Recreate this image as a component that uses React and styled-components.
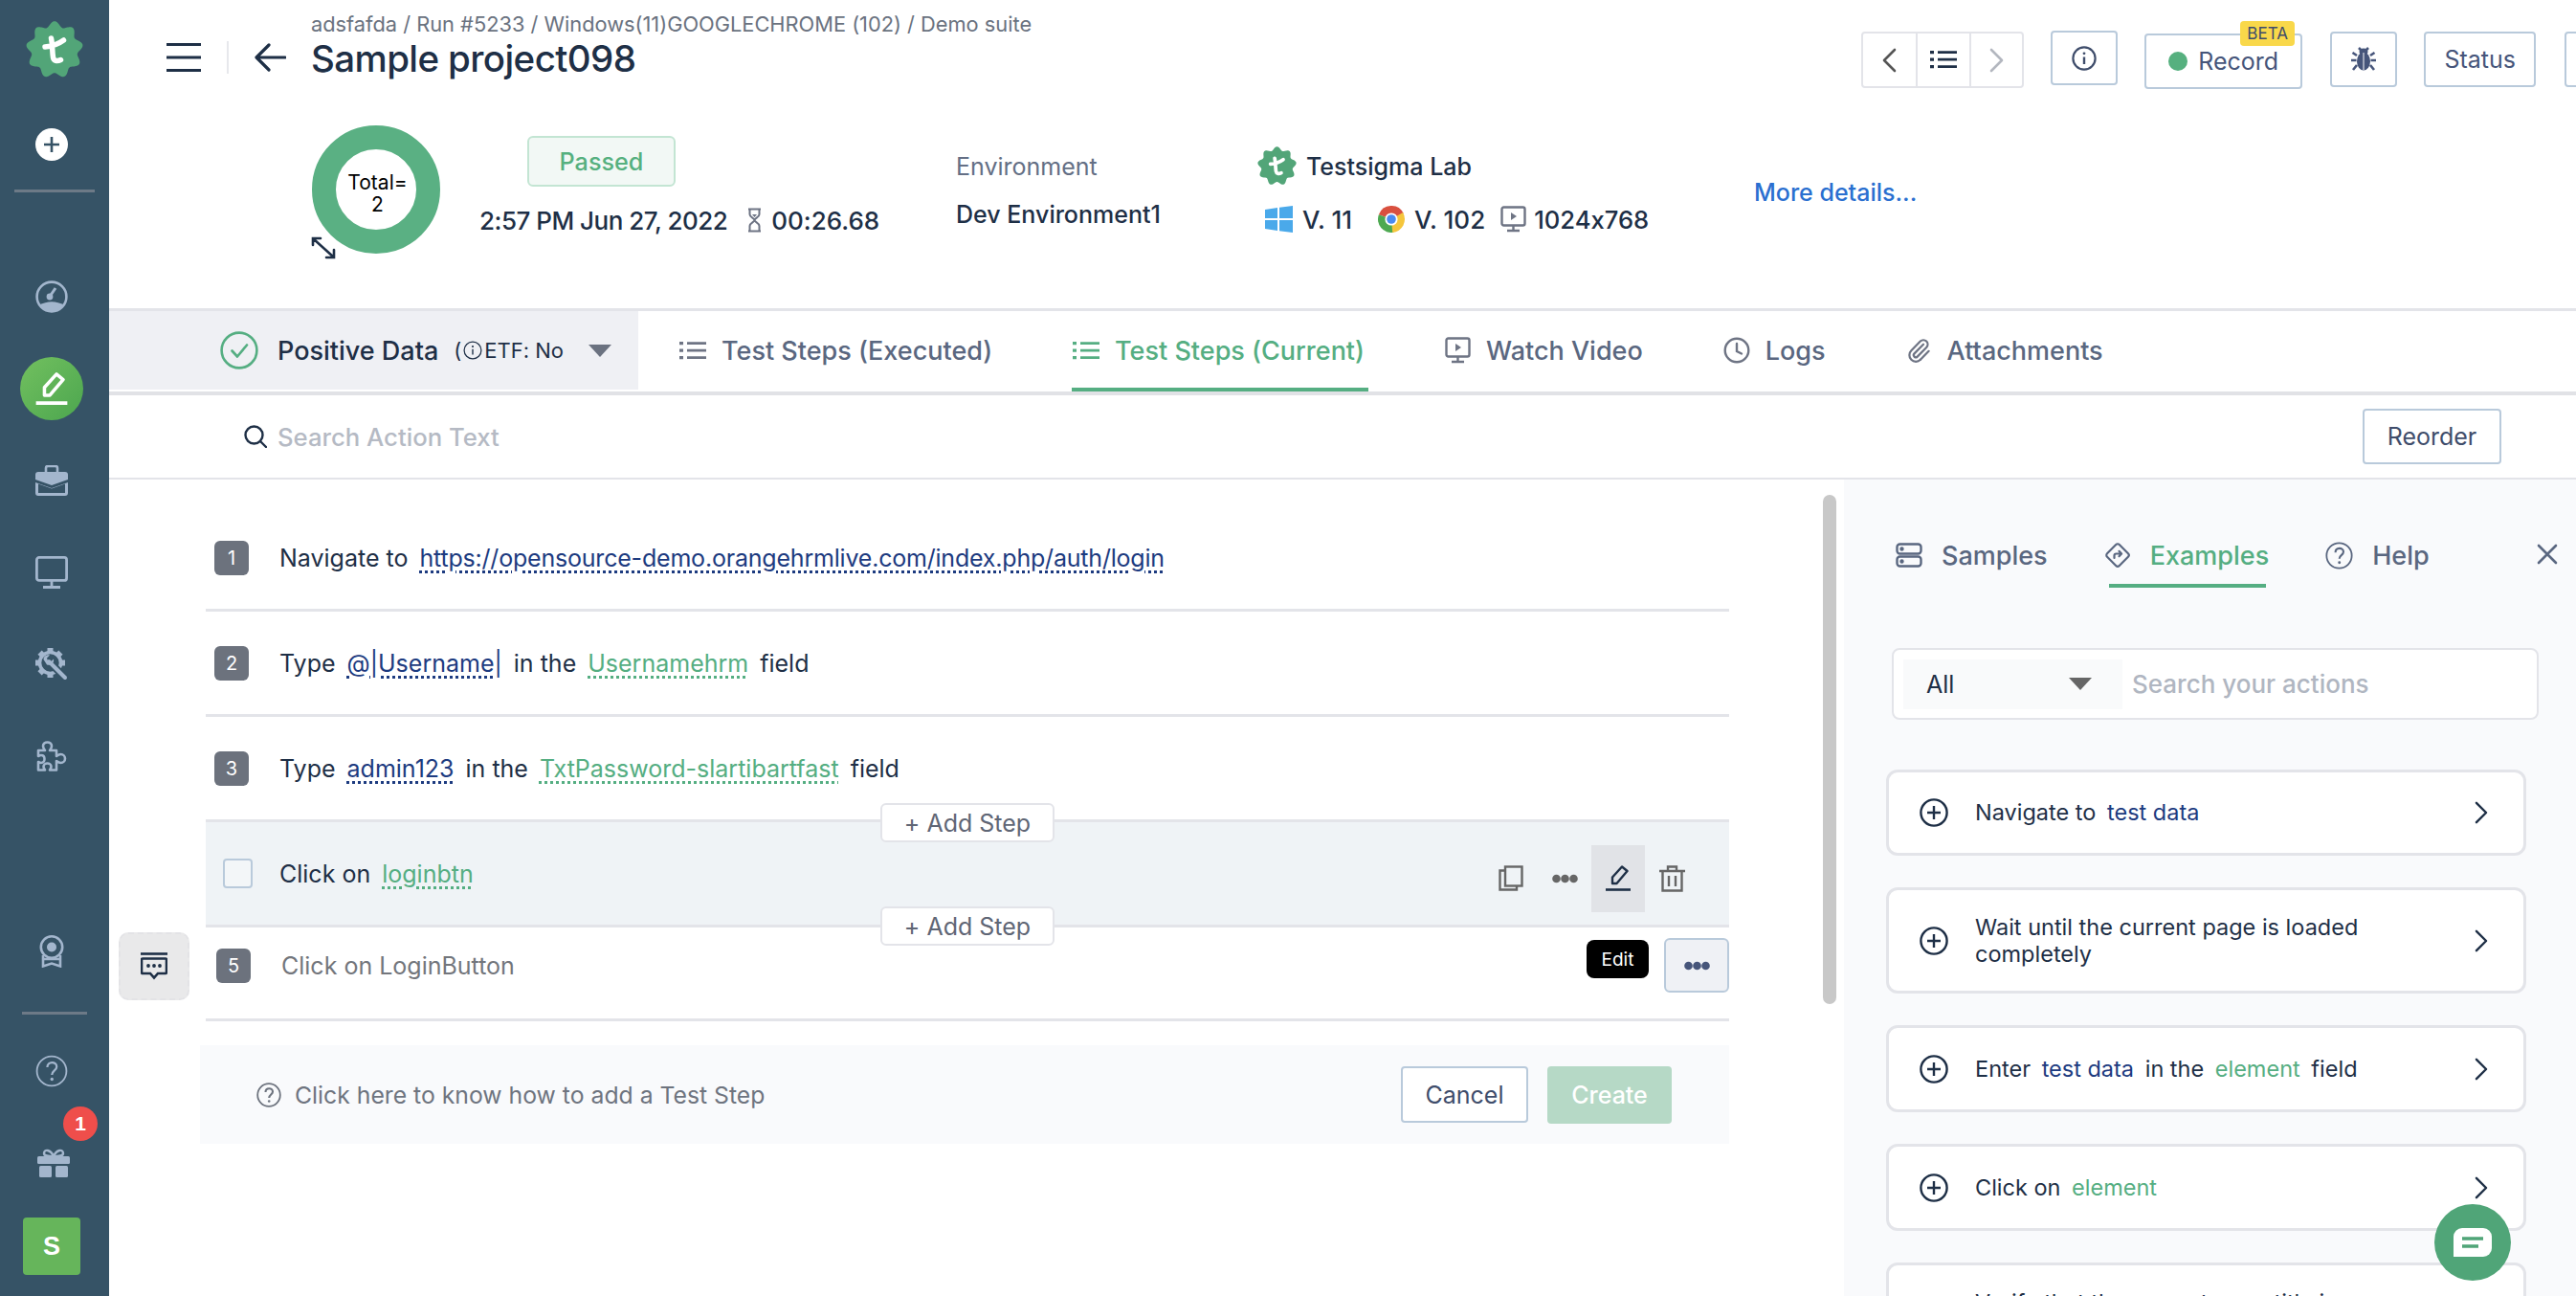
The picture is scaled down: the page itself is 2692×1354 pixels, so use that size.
import React from "react";
import styled, { createGlobalStyle } from "styled-components";

const DARK = "#1e2f46";
const SLATE = "#5a6780";
const GREEN = "#55ae82";
const NAVY = "#1d3b80";
const LINE = "#e3e4e9";
const BTN_LINE = "#b9cadb";
const SIDE_ICON = "#a3b6cd";
const SIDE_BG = "#365366";

const Global = createGlobalStyle`
  html, body { margin: 0; padding: 0; background: #fff; }
  body { font-family: Inter, "Noto Sans", "Liberation Sans", sans-serif; color: ${DARK}; font-feature-settings: "calt" 0; }
  * { box-sizing: border-box; }
  svg { display: block; flex-shrink: 0; }
`;

const Page = styled.div`display:flex;width:2692px;height:1354px;overflow:hidden;background:#fff;`;

/* Sidebar */
const Sidebar = styled.nav`width:114px;flex:none;background:${SIDE_BG};display:flex;flex-direction:column;align-items:center;`;
const LogoSlot = styled.div`margin-top:22px;height:60px;display:flex;`;
const AddSlot = styled.div`margin-top:52px;margin-left:-6px;width:34px;height:34px;border-radius:50%;background:#fff;display:flex;align-items:center;justify-content:center;`;
const SideRule = styled.div`width:${p=>p.$w}px;height:3px;background:#6d7a87;margin-top:${p=>p.$mt}px;flex:none;`;
const SideStack = styled.div`display:flex;flex-direction:column;align-items:center;margin-top:61px;margin-left:-6px;`;
const SideSlot = styled.div`height:96px;width:66px;display:flex;align-items:center;justify-content:center;position:relative;`;
const ActiveCircle = styled.div`width:66px;height:66px;border-radius:50%;background:linear-gradient(135deg,#72c05f,#4ca64f);display:flex;align-items:center;justify-content:center;`;
const SideBottom = styled.div`margin-top:auto;display:flex;flex-direction:column;align-items:center;padding-bottom:22px;`;
const AwardSlot = styled.div`height:44px;margin-left:-6px;display:flex;align-items:center;`;
const HelpSlot = styled.div`margin-top:42px;margin-left:-6px;`;
const GiftSlot = styled.div`margin-top:64px;margin-left:-2px;position:relative;`;
const CountBadge = styled.span`position:absolute;left:27px;top:-44px;width:36px;height:36px;border-radius:50%;background:#ef4e4b;color:#fff;font-family:"Liberation Sans",sans-serif;font-weight:700;font-size:21px;display:flex;align-items:center;justify-content:center;`;
const Avatar = styled.div`margin-top:42px;margin-left:-6px;width:60px;height:60px;border-radius:4px;background:#66b55b;color:#fff;font-family:"Liberation Sans",sans-serif;font-weight:700;font-size:27px;display:flex;align-items:center;justify-content:center;`;

/* Main */
const Main = styled.main`flex:1;min-width:0;display:flex;flex-direction:column;overflow:hidden;`;
const Header = styled.header`height:325px;flex:none;border-bottom:3px solid ${LINE};`;
const TopBar = styled.div`display:flex;height:110px;align-items:flex-start;`;
const TopLeft = styled.div`flex:0 0 1831px;display:flex;padding-left:60px;`;
const NavControls = styled.div`display:flex;align-items:center;height:40px;margin-top:40px;gap:27px;`;
const VRule = styled.div`width:2px;height:34px;background:#e7e8ec;`;
const TitleBlock = styled.div`margin-left:26px;margin-top:10px;`;
const Breadcrumb = styled.div`font-size:21.8px;line-height:30px;color:#6a7280;white-space:nowrap;`;
const Title = styled.h1`margin:0;font-size:38.5px;line-height:42px;font-weight:500;color:${DARK};letter-spacing:-0.6px;white-space:nowrap;`;
const Toolbar = styled.div`display:flex;flex:none;align-items:flex-start;padding-top:32px;`;
const NavGroup = styled.div`display:flex;height:59px;margin-top:1px;border:2px solid ${LINE};border-radius:4px;`;
const NavCell = styled.div`width:55.4px;display:flex;align-items:center;justify-content:center;& + &{border-left:2px solid ${LINE};}`;
const ToolButton = styled.button`
  font-family:inherit;font-feature-settings:inherit;font-size:25px;color:#46557a;background:#fff;border:2px solid ${BTN_LINE};border-radius:4px;
  width:${p=>p.$w}px;height:${p=>p.$h||58}px;margin-left:${p=>p.$ml}px;margin-top:${p=>p.$mt||0}px;padding:0;flex:none;
  display:flex;align-items:center;justify-content:center;position:relative;
`;
const RecordDot = styled.span`width:20px;height:20px;border-radius:50%;background:#56b07f;margin-right:11px;`;
const Beta = styled.span`position:absolute;top:-15px;right:6px;width:57px;height:26px;background:#f9d84a;border-radius:4px;color:#3f4c6b;font-size:17px;display:flex;align-items:center;justify-content:center;`;

const Summary = styled.section`display:flex;margin-top:21px;padding-left:212px;align-items:flex-start;`;
const Donut = styled.div`position:relative;width:134px;height:134px;border-radius:50%;border:25px solid #5ab083;flex:none;display:flex;align-items:center;justify-content:center;color:#000;font-size:21px;line-height:23px;text-align:center;`;
const DonutText = styled.span`padding:7px 0 0 3px;`;
const Expand = styled.span`position:absolute;left:-26px;bottom:-31px;`;
const StatusCol = styled.div`width:498px;margin-left:41px;padding-top:11px;flex:none;`;
const Passed = styled.div`margin-left:50px;width:155px;height:53px;border:2px solid #c3e5d3;border-radius:6px;background:#f2f8f5;color:#56b07f;font-size:25.2px;font-weight:500;display:flex;align-items:center;justify-content:center;`;
const DateRow = styled.div`margin-top:20px;display:flex;align-items:center;height:30px;font-size:26px;font-weight:500;color:${DARK};white-space:nowrap;`;
const DateText = styled.span`letter-spacing:-0.5px;`;
const HourSlot = styled.span`margin:0 10px 0 21px;`;
const EnvCol = styled.div`width:315px;flex:none;padding-top:29px;white-space:nowrap;`;
const EnvLabel = styled.div`font-size:25px;line-height:28px;color:#646f85;`;
const EnvValue = styled.div`margin-top:22px;font-size:25px;line-height:28px;font-weight:500;color:${DARK};`;
const LabCol = styled.div`width:519px;flex:none;padding-top:22px;white-space:nowrap;`;
const LabRow = styled.div`display:flex;align-items:center;height:41px;gap:10px;font-size:25px;font-weight:500;color:${DARK};`;
const SpecRow = styled.div`display:flex;align-items:center;height:30px;margin-top:20px;margin-left:8px;font-size:26px;font-weight:500;color:${DARK};`;
const SpecText = styled.span`margin-left:${p=>p.$ml}px;margin-right:${p=>p.$mr||0}px;`;
const SpecSize = styled(SpecText)`font-size:25.6px;`;
const MoreLink = styled.a`margin-top:55px;font-size:25px;line-height:30px;font-weight:500;color:#2a6fd0;white-space:nowrap;`;

/* Tabs */
const TabsBar = styled.div`height:88px;flex:none;display:flex;border-bottom:4px solid #e1e2e6;`;
const DataSelect = styled.div`width:553px;height:82px;background:#eff0f4;display:flex;align-items:center;padding-left:116px;flex:none;`;
const DataName = styled.span`font-size:27px;font-weight:500;margin-left:20px;color:${DARK};white-space:nowrap;`;
const Etf = styled.span`display:flex;align-items:center;font-size:22px;margin-left:16px;color:${DARK};white-space:nowrap;gap:2px;`;
const CaretSlot = styled.span`margin-left:26px;display:flex;`;
const Caret = styled.span`width:0;height:0;border-left:${p=>p.$s||12}px solid transparent;border-right:${p=>p.$s||12}px solid transparent;border-top:${p=>(p.$s||12)+1}px solid ${p=>p.$c||"#6b7280"};`;
const TabList = styled.div`display:flex;gap:84px;margin-left:43px;`;
const Tab = styled.div`display:flex;align-items:center;gap:16px;position:relative;height:84px;padding-bottom:2px;font-size:27px;font-weight:500;color:${p=>p.$active?GREEN:SLATE};white-space:nowrap;
  ${p=>p.$active?`&::after{content:"";position:absolute;left:-1px;right:-4px;bottom:0;height:4px;background:${GREEN};}`:""}
`;

/* Search */
const SearchBar = styled.div`height:88px;flex:none;display:flex;align-items:center;padding:0 78px 0 141px;border-bottom:2px solid ${LINE};`;
const SearchHint = styled.span`margin-left:11px;font-size:25.7px;font-weight:500;color:#b5bac4;`;
const Reorder = styled.button`margin-left:auto;width:145px;height:58px;background:#fff;border:2px solid ${BTN_LINE};border-radius:4px;font-family:inherit;font-size:25px;color:#3f4d6b;`;

/* Workspace */
const Workspace = styled.div`flex:1;min-height:0;display:flex;`;
const StepsColumn = styled.div`width:1592px;margin-left:101px;padding-top:28px;flex:none;`;
const Scroll = styled.div`width:14px;height:532px;margin:16px 8px 0 98px;border-radius:7px;background:#c8c8c8;flex:none;`;
const Row = styled.div`
  position:relative;display:flex;align-items:center;height:${p=>p.$h||110}px;border-bottom:3px solid ${LINE};
  padding-left:${p=>p.$pl||9}px;padding-bottom:${p=>p.$pb||0}px;background:${p=>p.$hover?"#eff3f6":"transparent"};
  font-size:25px;color:${p=>p.$muted?"#73767c":DARK};white-space:nowrap;
`;
const RowText = styled.span`margin-left:-1px;`;
const Num = styled.span`width:36px;height:36px;border-radius:6px;background:#6c727d;color:#fff;font-size:20px;display:flex;align-items:center;justify-content:center;margin-right:${p=>p.$mr||33}px;flex:none;`;
const Check = styled.span`width:31px;height:31px;border:2px solid ${BTN_LINE};border-radius:4px;margin-right:29px;background:#f3f6f8;flex:none;`;
const Token = styled.span`margin:0 5px;color:${p=>p.$el?GREEN:NAVY};
  ${p=>p.$dotted?`text-decoration:underline dotted 3px;text-underline-offset:4px;`:""}
  ${p=>p.$tight?`letter-spacing:-0.2px;`:""}
`;
const AddStep = styled.div`position:absolute;left:705px;bottom:${p=>p.$b}px;width:182px;height:41px;z-index:2;background:#fff;border:2px solid ${LINE};border-radius:6px;font-size:25px;color:#5f6675;display:flex;align-items:center;justify-content:center;`;
const RowActions = styled.div`margin-left:auto;margin-top:10px;padding-right:32px;display:flex;align-items:center;`;
const ActionSlot = styled.span`width:56px;height:70px;display:flex;align-items:center;justify-content:center;background:${p=>p.$on?"#e1e3e7":"transparent"};`;
const CommentBtn = styled.div`position:absolute;left:-91px;top:5px;width:74px;height:71px;background:#e9e9ea;border:2px dashed #e3e3e6;border-radius:10px;display:flex;align-items:center;justify-content:center;`;
const Tooltip = styled.span`position:absolute;right:84px;top:13px;width:65px;height:40px;background:#000;color:#fff;font-size:19px;border-radius:8px;display:flex;align-items:center;justify-content:center;`;
const MoreBtn = styled.div`margin-left:auto;width:68px;height:57px;border:2px solid ${BTN_LINE};border-radius:6px;background:#eff1f5;display:flex;align-items:center;justify-content:center;`;
const HelpPanel = styled.div`margin:25px 0 0 -6px;width:1598px;height:103px;background:#f9fafc;display:flex;align-items:center;padding:0 60px 0 59px;`;
const HelpText = styled.span`margin-left:14px;font-size:24.75px;color:#6e747f;white-space:nowrap;`;
const CancelBtn = styled.button`margin-left:auto;width:133px;height:59px;border:2px solid ${BTN_LINE};border-radius:4px;background:#fff;font-family:inherit;font-size:25px;color:#3f4d6b;`;
const CreateBtn = styled.button`margin-left:20px;width:130px;height:60px;border:none;border-radius:4px;background:#b6d9c6;color:#fff;font-family:inherit;font-size:25px;font-weight:500;`;

/* Right panel */
const Panel = styled.aside`flex:1;min-width:0;background:#f9fafc;overflow:hidden;position:relative;`;
const PanelTabs = styled.div`display:flex;height:113px;padding:0 19px 0 54px;gap:59px;`;
const PanelTab = styled.div`position:relative;display:flex;align-items:center;gap:20px;margin-top:45px;height:68px;font-size:27px;font-weight:500;color:${p=>p.$active?GREEN:SLATE};white-space:nowrap;
  ${p=>p.$active?`&::after{content:"";position:absolute;left:5px;right:3px;bottom:0;height:4px;background:${GREEN};}`:""}
`;
const CloseSlot = styled.span`margin-left:auto;margin-top:67px;`;
const FilterBox = styled.div`margin:63px 0 0 50px;width:676px;height:75px;background:#fff;border:2px solid ${LINE};border-radius:8px;display:flex;align-items:center;padding-left:10px;`;
const FilterSelect = styled.div`width:229px;height:52px;background:#f9fafb;display:flex;align-items:center;padding:0 32px 0 24px;justify-content:space-between;font-size:25px;color:${DARK};`;
const FilterHint = styled.span`margin-left:10px;font-size:26px;font-weight:500;color:#b0b6c1;`;
const Cards = styled.div`margin:52px 0 0 44px;width:669px;display:flex;flex-direction:column;gap:33px;`;
const Card = styled.div`height:${p=>p.$h||91}px;flex:none;background:#fff;border:3px solid ${LINE};border-radius:12px;display:flex;align-items:center;padding:0 37px 0 32px;`;
const CardText = styled.div`margin-left:28px;width:420px;font-size:23.5px;line-height:28px;color:${DARK};`;
const CardChevron = styled.span`margin-left:auto;`;
const ChatFab = styled.div`position:absolute;right:68px;top:757px;width:80px;height:80px;border-radius:50%;background:#50a578;display:flex;align-items:center;justify-content:center;`;

/* Drawings */
const pt=(cx,cy,r,a)=>[cx+r*Math.cos(a),cy+r*Math.sin(a)];
const scallop=(c,R,amp,n)=>{let d="";for(let i=0;i<=240;i++){const t=i/240*Math.PI*2;const r=R+amp*Math.cos(n*t);const [x,y]=pt(c,c,r,t-Math.PI/2);d+=(i?"L":"M")+x.toFixed(2)+" "+y.toFixed(2);}return d+"Z";};
const sector=(c,r,a0,a1)=>{const A=a=>a*Math.PI/180;const [x0,y0]=pt(c,c,r,A(a0));const [x1,y1]=pt(c,c,r,A(a1));return `M${c} ${c}L${x0} ${y0}A${r} ${r} 0 0 1 ${x1} ${y1}Z`;};

const Logo=({s=60,c="#52a578"})=>(
  <svg width={s} height={s} viewBox="0 0 60 60">
    <path d={scallop(30,27,2.8,9)} fill={c}/>
    <path d="M26.500 18C28 25 27.500 32 28.500 38c.6 3.500 4 4.500 8 2.500M20 27c7-.5 14-3 19.500-7" fill="none" stroke="#fff" strokeWidth="5.500" strokeLinecap="round"/>
  </svg>
);
const Hamburger=()=>(<svg width="36" height="30" viewBox="0 0 36 30"><path d="M0 1.500h36M0 15h36M0 28.500h36" stroke={DARK} strokeWidth="3"/></svg>);
const BackArrow=()=>(<svg width="33" height="30" viewBox="0 0 33 30" fill="none" stroke={DARK} strokeWidth="3.200" strokeLinecap="round" strokeLinejoin="round"><path d="M32 15H3M15 2 2 15l13 13"/></svg>);
const Plus=()=>(<svg width="18" height="18" viewBox="0 0 18 18"><path d="M9 1v16M1 9h16" stroke={SIDE_BG} strokeWidth="2.600"/></svg>);
const ExpandIcon=()=>(<svg width="26" height="24" viewBox="0 0 26 24" fill="none" stroke={DARK} strokeWidth="2.600" strokeLinecap="round"><path d="M3 3l20 18M2 9V2h8M24 14v8h-8"/></svg>);
const Hourglass=()=>(<svg width="15" height="26" viewBox="0 0 15 26" fill="none" stroke="#6e7484" strokeWidth="2"><path d="M1 1.500h13M1 24.500h13M2.500 2v5c0 3 5 4 5 6s-5 3-5 6v5M12.500 2v5c0 3-5 4-5 6s5 3 5 6v5"/><path d="M5 7h5l-2.500 3z" fill="#6e7484" stroke="none"/></svg>);
const WinIcon=()=>(<svg width="29" height="28" viewBox="0 0 29 28" fill="#4aa9ea"><path d="M0 4l13-2v11H0zM15 1.700L29 0v13H15zM0 15h13v11L0 24zM15 15h14v13l-14-1.800z"/></svg>);
const ChromeIcon=()=>(<svg width="28" height="28" viewBox="0 0 28 28"><path d={sector(14,14,-160,-25)} fill="#d9503f"/><path d={sector(14,14,80,200)} fill="#4da951"/><path d={sector(14,14,-30,85)} fill="#f5c63c"/><circle cx="14" cy="14" r="6.600" fill="#fff"/><circle cx="14" cy="14" r="4.800" fill="#4a8af0"/></svg>);
const ScreenPlay=({c="#6e7484",w=27,h=28})=>(<svg width={w} height={h} viewBox="0 0 27 28" fill="none" stroke={c} strokeWidth="2.400"><rect x="1.500" y="1.500" width="24" height="19" rx="2"/><path d="M13.500 21v4M7 26h13" /><path d="M11 7l6 4-6 4z" fill={c} stroke="none"/></svg>);
const ChevL=({c="#555"})=>(<svg width="15" height="26" viewBox="0 0 15 26" fill="none" stroke={c} strokeWidth="2.600" strokeLinecap="round" strokeLinejoin="round"><path d="M13 2 2 13l11 11"/></svg>);
const ChevR=({c="#b3b7bf",w=15,h=26})=>(<svg width={w} height={h} viewBox="0 0 15 26" fill="none" stroke={c} strokeWidth="2.600" strokeLinecap="round" strokeLinejoin="round"><path d="M2 2l11 11L2 24"/></svg>);
const ListIcon=({c=DARK,s=28})=>(<svg width={s} height={s*0.72} viewBox="0 0 28 20" fill="none" stroke={c} strokeWidth="2.600"><path d="M8 2.500h20M8 10h20M8 17.500h20"/><path d="M0 2.500h4M0 10h4M0 17.500h4" strokeWidth="3.400"/></svg>);
const InfoIcon=({s=26,c="#3f4d6b",w=2.2})=>(<svg width={s} height={s} viewBox="0 0 26 26" fill="none" stroke={c} strokeWidth={w}><circle cx="13" cy="13" r="11.600"/><path d="M13 11.500V19" strokeWidth={w+.2}/><circle cx="13" cy="7.800" r="1.400" fill={c} stroke="none"/></svg>);
const BugIcon=()=>(<svg width="26" height="26" viewBox="0 0 26 26" fill="#46557a"><ellipse cx="13" cy="15" rx="7" ry="9.500"/><ellipse cx="13" cy="5" rx="4.500" ry="3.500"/><path d="M8 1l3 3M18 1l-3 3M6 9L1.500 6M20 9l4.500-3M5.500 14H0M20.500 14H26M6 19l-4 5M20 19l4 5" stroke="#46557a" strokeWidth="2.600"/><path d="M13 6v18" stroke="#fff" strokeWidth="1"/></svg>);
const CheckCircle=()=>(<svg width="40" height="40" viewBox="0 0 40 40" fill="none" stroke={GREEN} strokeWidth="2.600"><circle cx="20" cy="20" r="18.400"/><path d="M12.500 20.500l5.500 6 10-12" strokeLinecap="round" strokeLinejoin="round"/></svg>);
const ClockIcon=()=>(<svg width="28" height="28" viewBox="0 0 28 28" fill="none" stroke="#6e7484" strokeWidth="2.400"><circle cx="14" cy="14" r="12.300"/><path d="M14 7v8l5 2.500" strokeLinecap="round"/></svg>);
const ClipIcon=()=>(<svg width="27" height="27" viewBox="0 0 24 24" fill="none" stroke="#6e7484" strokeWidth="2" strokeLinecap="round" strokeLinejoin="round"><path d="M13.234 20.252 21 12.300"/><path d="m16 6-8.414 8.586a2 2 0 0 0 0 2.828 2 2 0 0 0 2.828 0l8.414-8.586a4 4 0 0 0 0-5.656 4 4 0 0 0-5.656 0l-8.415 8.585a6 6 0 1 0 8.486 8.486"/></svg>);
const SearchIcon=()=>(<svg width="24" height="24" viewBox="0 0 24 24" fill="none" stroke={DARK} strokeWidth="2.400" strokeLinecap="round"><circle cx="10.500" cy="10.500" r="9"/><path d="M17 17l6 6"/></svg>);
const CopyIcon=()=>(<svg width="26" height="27" viewBox="0 0 26 27" fill="none" stroke="#666" strokeWidth="2.400"><rect x="7" y="1.500" width="17.500" height="20"/><path d="M7 5.500H1.500v20H19V21.500"/></svg>);
const Dots=({c="#666",w=27})=>(<svg width={w} height="10" viewBox="0 0 27 10" fill={c}><circle cx="4.500" cy="5" r="4.300"/><circle cx="13.500" cy="5" r="4.300"/><circle cx="22.500" cy="5" r="4.300"/></svg>);
const EditIcon=({c=DARK,w=26,h=27,sw=2.4,base=2.6})=>(<svg width={w} height={h} viewBox="0 0 26 27" fill="none" stroke={c} strokeWidth={sw} strokeLinejoin="round"><path d="M7 19v-6.500L17 1.500l5.500 4.500L11.500 19z"/><path d="M0 25.500h26" strokeWidth={base}/></svg>);
const TrashIcon=()=>(<svg width="27" height="28" viewBox="0 0 27 28" fill="none" stroke="#666" strokeWidth="2.400"><path d="M0 6h27M9 6V1.500h9V6M3.500 6v20.500h20V6M10 11v11M17 11v11"/></svg>);
const CommentIcon=()=>(<svg width="28" height="29" viewBox="0 0 28 29" fill="none" stroke={DARK} strokeWidth="2.600"><path d="M0 1.500h28" /><path d="M2 6.500h24a1 1 0 0 1 1 1V21a1 1 0 0 1-1 1h-8l-4 4.500L10 22H2a1 1 0 0 1-1-1V7.500a1 1 0 0 1 1-1z"/><g fill={DARK} stroke="none"><circle cx="8" cy="14" r="1.900"/><circle cx="14" cy="14" r="1.900"/><circle cx="20" cy="14" r="1.900"/></g></svg>);
const HelpIcon=({s=26,c="#6e747f",w=1.8})=>(<svg width={s} height={s} viewBox="0 0 26 26" fill="none" stroke={c} strokeWidth={w}><circle cx="13" cy="13" r="11.800"/><path d="M9.500 10c0-5 7.500-5 7.500-.5 0 3-3.800 3-3.800 6.500" strokeWidth={w+.3}/><circle cx="13.200" cy="19.500" r="1.300" fill={c} stroke="none"/></svg>);
const SamplesIcon=()=>(<svg width="28" height="26" viewBox="0 0 28 26" fill="none" stroke={SLATE} strokeWidth="2.400"><rect x="1.500" y="1.500" width="25" height="10" rx="3"/><rect x="1.500" y="14.500" width="25" height="10" rx="3"/><circle cx="6.500" cy="6.500" r="1" fill={SLATE}/><circle cx="6.500" cy="19.500" r="1" fill={SLATE}/></svg>);
const ExampleIcon=()=>(<svg width="28" height="28" viewBox="0 0 28 28" fill="none" stroke={SLATE} strokeWidth="2.200" strokeLinejoin="round"><rect x="5" y="5" width="18" height="18" rx="2.500" transform="rotate(45 14 14)"/><path d="M10.500 17v-2.500a2 2 0 0 1 2-2h5M15.500 9.800l2.600 2.700-2.600 2.700" strokeLinecap="round"/></svg>);
const CloseIcon=()=>(<svg width="22" height="22" viewBox="0 0 22 22" stroke={SLATE} strokeWidth="2.600" strokeLinecap="round"><path d="M2 2l18 18M20 2 2 20"/></svg>);
const PlusCircle=()=>(<svg width="30" height="30" viewBox="0 0 30 30" fill="none" stroke={DARK} strokeWidth="2.400"><circle cx="15" cy="15" r="13.600"/><path d="M15 8v14M8 15h14"/></svg>);
const ChatIcon=()=>(<svg width="40" height="30" viewBox="0 0 40 30"><path d="M9 0h22a9 9 0 0 1 9 9v12a9 9 0 0 1-9 9H0V9a9 9 0 0 1 9-9z" fill="#fff"/><path d="M9 11h22M9 19h17" stroke="#50a578" strokeWidth="3.400"/></svg>);
const Gauge=()=>(<svg width="34" height="34" viewBox="0 0 34 34" fill="none" stroke={SIDE_ICON} strokeWidth="2.600"><circle cx="17" cy="17" r="15.400"/><path d="M4 26c8-5 18-5 26 0-3 4-8 6.500-13 6.500S7 30 4 26z" fill={SIDE_ICON} stroke="none"/><circle cx="15" cy="17" r="3.400" fill={SIDE_ICON} stroke="none"/><path d="M15.500 16 21 8" strokeWidth="3"/></svg>);
const EditWhite=()=>(<EditIcon c="#fff" w={34} h={34} sw={2.8} base={3}/>);
const Briefcase=()=>(<svg width="34" height="32" viewBox="0 0 34 32" fill="none"><path d="M11 8V3a2 2 0 0 1 2-2h8a2 2 0 0 1 2 2v5" stroke={SIDE_ICON} strokeWidth="2.600"/><path d="M3 7h28a3 3 0 0 1 3 3v5l-17 6L0 15v-5a3 3 0 0 1 3-3z" fill={SIDE_ICON}/><path d="M0 18l17 6 17-6v11a3 3 0 0 1-3 3H3a3 3 0 0 1-3-3z" fill={SIDE_ICON}/><path d="M3 19.500V29h28v-9.500L17 24.500z" fill={SIDE_BG}/></svg>);
const Monitor=()=>(<svg width="34" height="34" viewBox="0 0 34 34" fill="none" stroke={SIDE_ICON} strokeWidth="2.800"><rect x="1.400" y="1.400" width="31.200" height="24" rx="2.500"/><path d="M17 25.500V32M8 32.500h18"/></svg>);
const GearWrench=()=>{const teeth=[0,45,90,135,180,225,270,315];return(<svg width="34" height="34" viewBox="0 0 34 34"><g fill={SIDE_ICON}>{teeth.map(a=>(<rect key={a} x="12.500" y="0" width="6" height="6" transform={`rotate(${a} 15.500 15.500)`}/>))}</g><circle cx="15.500" cy="15.500" r="11" fill="none" stroke={SIDE_ICON} strokeWidth="3.600"/><path d="M13 13l19 19" stroke={SIDE_BG} strokeWidth="8"/><path d="M14 14l17 17" stroke={SIDE_ICON} strokeWidth="4" strokeLinecap="round"/><path d="M8.500 12c0-3 3-5.500 6.500-4.500l-3 3 1 3 3 1 3-3c1 4-3 7.500-7 6" fill={SIDE_ICON}/></svg>);};
const PuzzleIcon=()=>(<svg width="32" height="32" viewBox="0 0 32 32" fill="none" stroke={SIDE_ICON} strokeWidth="2.600" strokeLinejoin="round"><path d="M2 10h7c-1.500-2-2-3-2-4.500C7 3 9 1.500 11.500 1.500S16 3 16 5.500c0 1.500-.5 2.500-2 4.500h7v6c2-1.500 3-2 4.500-2 2.500 0 4.500 2 4.500 4.500S28 23 25.500 23c-1.500 0-2.500-.5-4.500-2v9.500H14c1-1.500 1.500-2.500 1.500-3.500 0-2-2-3.500-4-3.500s-4 1.500-4 3.500c0 1 .5 2 1.500 3.500H2V22c1 .5 2 1 3 1 2 0 3.500-1.500 3.500-4S7 15 5 15c-1 0-2 .5-3 1z"/></svg>);
const Award=()=>(<svg width="26" height="34" viewBox="0 0 26 34" fill="none" stroke={SIDE_ICON} strokeWidth="2.600"><circle cx="13" cy="12.500" r="11.200"/><circle cx="13" cy="12.500" r="5" fill={SIDE_ICON} stroke="none"/><path d="M4 21v11.500l9-3 9 3V21M4 25h18" /></svg>);
const Gift=()=>(<svg width="34" height="30" viewBox="0 0 34 30" fill={SIDE_ICON}><path d="M17 8c-3-7-10-8-10-3 0 3 4 3 10 3zM17 8c3-7 10-8 10-3 0 3-4 3-10 3z" fill="none" stroke={SIDE_ICON} strokeWidth="2.400"/><rect x="0" y="8" width="34" height="8" rx="1.500"/><rect x="2" y="18" width="13" height="12" rx="1.500"/><rect x="19" y="18" width="13" height="12" rx="1.500"/></svg>);

const Tk=({children})=>(<Token>{children}</Token>);
const El=({children})=>(<Token $el>{children}</Token>);
const CardArrow=()=>(<CardChevron><ChevR c={DARK} w={14} h={24}/></CardChevron>);

export default function App(){
  return (
    <Page>
      <Global/>
      <Sidebar>
        <LogoSlot><Logo/></LogoSlot>
        <AddSlot><Plus/></AddSlot>
        <SideRule $w={84} $mt={30}/>
        <SideStack>
          <SideSlot><Gauge/></SideSlot>
          <SideSlot><ActiveCircle><EditWhite/></ActiveCircle></SideSlot>
          <SideSlot><Briefcase/></SideSlot>
          <SideSlot><Monitor/></SideSlot>
          <SideSlot><GearWrench/></SideSlot>
          <SideSlot><PuzzleIcon/></SideSlot>
        </SideStack>
        <SideBottom>
          <AwardSlot><Award/></AwardSlot>
          <SideRule $w={68} $mt={41}/>
          <HelpSlot><HelpIcon s={34} c={SIDE_ICON} w={1.4}/></HelpSlot>
          <GiftSlot><CountBadge>1</CountBadge><Gift/></GiftSlot>
          <Avatar>S</Avatar>
        </SideBottom>
      </Sidebar>
      <Main>
        <Header>
          <TopBar>
            <TopLeft>
              <NavControls><Hamburger/><VRule/><BackArrow/></NavControls>
              <TitleBlock>
                <Breadcrumb>adsfafda / Run #5233 / Windows(11)GOOGLECHROME (102) / Demo suite</Breadcrumb>
                <Title>Sample project098</Title>
              </TitleBlock>
            </TopLeft>
            <Toolbar>
              <NavGroup>
                <NavCell><ChevL/></NavCell>
                <NavCell><ListIcon/></NavCell>
                <NavCell><ChevR/></NavCell>
              </NavGroup>
              <ToolButton $w={70} $h={57} $ml={28}><InfoIcon/></ToolButton>
              <ToolButton $w={165} $ml={28} $mt={3}><RecordDot/>Record<Beta>BETA</Beta></ToolButton>
              <ToolButton $w={70} $ml={29} $mt={1}><BugIcon/></ToolButton>
              <ToolButton $w={117} $ml={28} $mt={1}>Status</ToolButton>
              <ToolButton $w={70} $ml={30} $mt={1}/>
            </Toolbar>
          </TopBar>
          <Summary>
            <Donut><DonutText>Total=<br/>2</DonutText><Expand><ExpandIcon/></Expand></Donut>
            <StatusCol>
              <Passed>Passed</Passed>
              <DateRow><DateText>2:57 PM Jun 27, 2022</DateText><HourSlot><Hourglass/></HourSlot>00:26.68</DateRow>
            </StatusCol>
            <EnvCol>
              <EnvLabel>Environment</EnvLabel>
              <EnvValue>Dev Environment1</EnvValue>
            </EnvCol>
            <LabCol>
              <LabRow><Logo s={41}/>Testsigma Lab</LabRow>
              <SpecRow>
                <WinIcon/><SpecText $ml={10} $mr={27}>V. 11</SpecText>
                <ChromeIcon/><SpecText $ml={10} $mr={16}>V. 102</SpecText>
                <ScreenPlay/><SpecSize $ml={8}>1024x768</SpecSize>
              </SpecRow>
            </LabCol>
            <MoreLink>More details...</MoreLink>
          </Summary>
        </Header>
        <TabsBar>
          <DataSelect>
            <CheckCircle/>
            <DataName>Positive Data</DataName>
            <Etf>( <InfoIcon s={20} c={DARK} w={1.6}/>ETF: No</Etf>
            <CaretSlot><Caret/></CaretSlot>
          </DataSelect>
          <TabList>
            <Tab><ListIcon c="#6e7484"/>Test Steps (Executed)</Tab>
            <Tab $active><ListIcon c={GREEN}/>Test Steps (Current)</Tab>
            <Tab><ScreenPlay/>Watch Video</Tab>
            <Tab><ClockIcon/>Logs</Tab>
            <Tab><ClipIcon/>Attachments</Tab>
          </TabList>
        </TabsBar>
        <SearchBar>
          <SearchIcon/>
          <SearchHint>Search Action Text</SearchHint>
          <Reorder>Reorder</Reorder>
        </SearchBar>
        <Workspace>
          <StepsColumn>
            <Row><Num>1</Num><RowText>Navigate to <Token $dotted $tight>https://opensource-demo.orangehrmlive.com/index.php/auth/login</Token></RowText></Row>
            <Row><Num>2</Num><RowText>Type <Token $dotted>@|Username|</Token> in the <Token $dotted $el>Usernamehrm</Token> field</RowText></Row>
            <Row><Num>3</Num><RowText>Type <Token $dotted>admin123</Token> in the <Token $dotted $el>TxtPassword-slartibartfast</Token> field</RowText>
              <AddStep $b={-24}>+ Add Step</AddStep>
            </Row>
            <Row $hover $pl={18}><Check/><RowText>Click on <Token $dotted $el>loginbtn</Token></RowText>
              <RowActions>
                <ActionSlot><CopyIcon/></ActionSlot>
                <ActionSlot><Dots/></ActionSlot>
                <ActionSlot $on><EditIcon/></ActionSlot>
                <ActionSlot><TrashIcon/></ActionSlot>
              </RowActions>
              <AddStep $b={-22}>+ Add Step</AddStep>
            </Row>
            <Row $h={98} $pl={11} $pb={16} $muted>
              <CommentBtn><CommentIcon/></CommentBtn>
              <Num $mr={33}>5</Num><RowText>Click on LoginButton</RowText>
              <Tooltip>Edit</Tooltip>
              <MoreBtn><Dots c="#46557a"/></MoreBtn>
            </Row>
            <HelpPanel>
              <HelpIcon/>
              <HelpText>Click here to know how to add a Test Step</HelpText>
              <CancelBtn>Cancel</CancelBtn>
              <CreateBtn>Create</CreateBtn>
            </HelpPanel>
          </StepsColumn>
          <Scroll/>
          <Panel>
            <PanelTabs>
              <PanelTab><SamplesIcon/>Samples</PanelTab>
              <PanelTab $active><ExampleIcon/>Examples</PanelTab>
              <PanelTab><HelpIcon s={29} c={SLATE} w={1.6}/>Help</PanelTab>
              <CloseSlot><CloseIcon/></CloseSlot>
            </PanelTabs>
            <FilterBox>
              <FilterSelect>All<Caret $s={12} $c="#666"/></FilterSelect>
              <FilterHint>Search your actions</FilterHint>
            </FilterBox>
            <Cards>
              <Card $h={90}><PlusCircle/><CardText>Navigate to <Tk>test data</Tk></CardText><CardArrow/></Card>
              <Card $h={111}><PlusCircle/><CardText>Wait until the current page is loaded completely</CardText><CardArrow/></Card>
              <Card><PlusCircle/><CardText>Enter <Tk>test data</Tk> in the <El>element</El> field</CardText><CardArrow/></Card>
              <Card><PlusCircle/><CardText>Click on <El>element</El></CardText><CardArrow/></Card>
              <Card $h={111}><PlusCircle/><CardText>Verify that the current page title is <Tk>test data</Tk></CardText><CardArrow/></Card>
            </Cards>
            <ChatFab><ChatIcon/></ChatFab>
          </Panel>
        </Workspace>
      </Main>
    </Page>
  );
}
